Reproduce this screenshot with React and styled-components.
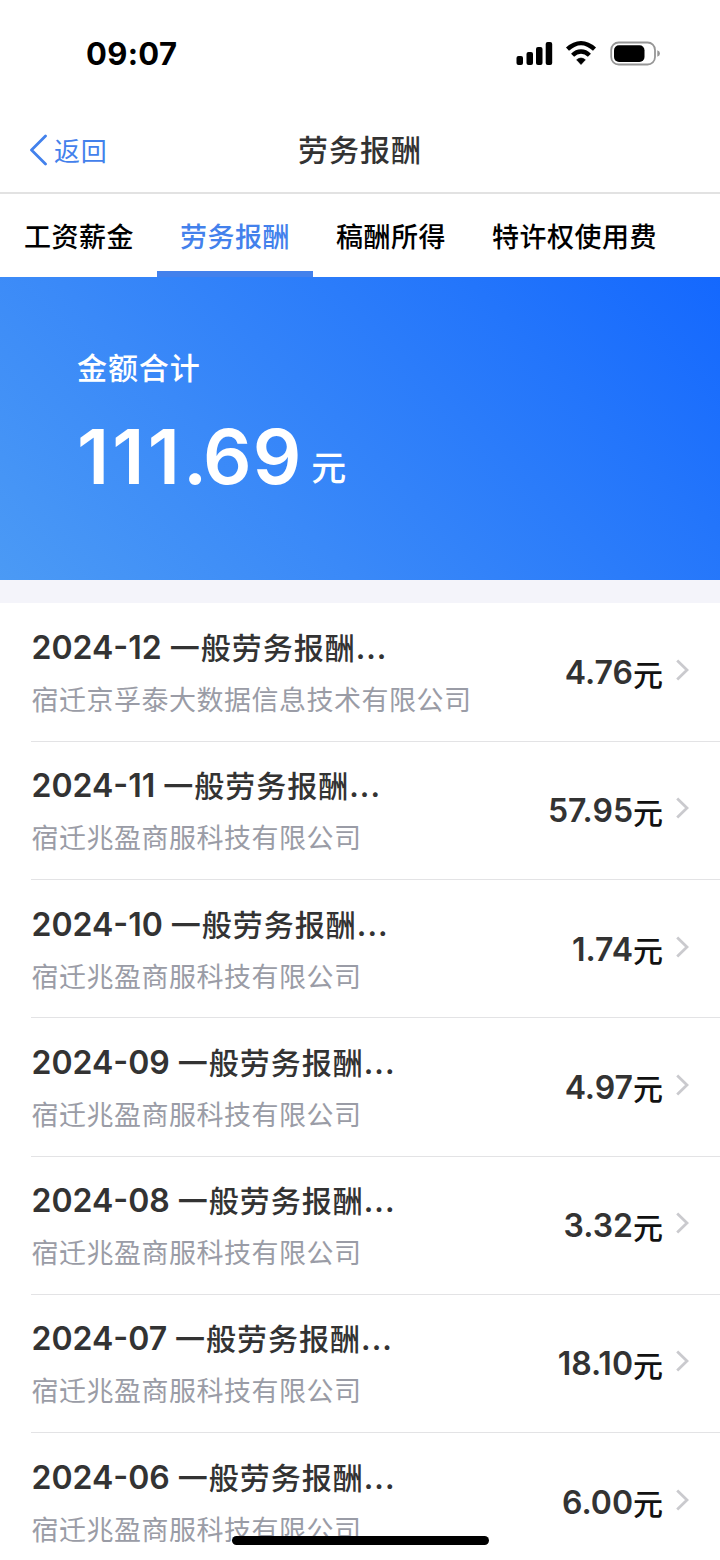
import React from "react";
import styled, { createGlobalStyle } from "styled-components";

const GlobalStyle = createGlobalStyle`
  * {
    box-sizing: border-box;
  }

  body {
    margin: 0;
    background: #fff;
    font-family: Inter, "Noto Sans CJK SC", sans-serif;
  }
`;

// Styled Components
const Screen = styled.div`
  position: relative;
  width: 720px;
  height: 1560px;
  overflow: hidden;
  background: #fff;
`;

const StatusBar = styled.div`
  display: flex;
  justify-content: space-between;
  align-items: center;
  height: 108px;
  padding: 0 60px 0 86px;
`;

const Clock = styled.div`
  font-size: 31px;
  font-weight: 700;
  line-height: 40px;
  letter-spacing: 0.3px;
  color: #000;
`;

const StatusIcons = styled.svg`
  display: block;
  width: 144px;
  height: 26px;
`;

const NavBar = styled.header`
  display: grid;
  grid-template-columns: 1fr auto 1fr;
  align-items: center;
  height: 86px;
  padding: 0 29px;
  border-bottom: 2px solid #e2e2e2;
`;

const BackButton = styled.a`
  display: flex;
  align-items: center;
  gap: 7px;
  font-size: 26px;
  line-height: 36px;
  letter-spacing: 0.8px;
  color: #4381ec;
`;

const BackLabel = styled.span`
  padding-top: 4px;
`;

const BackIcon = styled.svg`
  width: 18px;
  height: 32px;
`;

const Title = styled.h3`
  margin: 0;
  font-size: 30px;
  font-weight: 500;
  line-height: 40px;
  letter-spacing: 1px;
  color: #333;
`;

const Tabs = styled.nav`
  display: flex;
  height: 83px;
  padding-left: 1px;
`;

const Tab = styled.div`
  height: 83px;
  padding: 0 23px;
  border-bottom: 6px solid ${(props) => (props.$active ? "#4381ec" : "transparent")};
  font-size: 27px;
  font-weight: 500;
  line-height: 88px;
  letter-spacing: 0.5px;
  white-space: nowrap;
  color: ${(props) => (props.$active ? "#4381ec" : "#000")};
`;

const Summary = styled.section`
  height: 303px;
  padding: 70px 77px 0;
  background: linear-gradient(45deg, #4b9af5 0%, #3a89f8 35%, #2375fb 75%, #1468fe 100%);
  color: #fff;
`;

const SummaryLabel = styled.div`
  font-size: 30px;
  font-weight: 500;
  line-height: 42px;
  letter-spacing: 0.9px;
`;

const Total = styled.div`
  display: flex;
  align-items: baseline;
  margin-top: 21px;
  line-height: 92px;
`;

const TotalDigits = styled.span`
  font-size: 76px;
  font-weight: 600;
  letter-spacing: ${(props) => props.$spacing}px;
`;

const TotalUnit = styled.span`
  position: relative;
  top: -3px;
  margin-left: 9px;
  font-size: 35px;
  font-weight: 500;
`;

const Divider = styled.div`
  height: 23px;
  background: #f4f4fa;
`;

const List = styled.div`
  padding: 0.5px 0 0 31px;
`;

const Row = styled.div`
  display: flex;
  justify-content: space-between;
  height: 138.3px;
  padding: 24.5px 31px 0 0.5px;
  border-bottom: 1px solid #e3e3e5;
`;

const RowTitle = styled.div`
  display: flex;
  align-items: baseline;
  gap: 8px;
  height: 40px;
  line-height: 40px;
  color: #333;
`;

const Month = styled.span`
  font-size: 32px;
  font-weight: 600;
`;

const Kind = styled.span`
  font-size: 30px;
  font-weight: 500;
  letter-spacing: 1px;
`;

const Dots = styled.span`
  font-weight: 600;
`;

const Company = styled.div`
  margin-top: 13px;
  font-size: 27px;
  line-height: 40px;
  letter-spacing: 0.5px;
  color: #9a9ca6;
`;

const Amount = styled.div`
  display: flex;
  align-items: center;
  height: 89px;
  font-size: 32px;
  font-weight: 600;
  color: #333;
`;

const Unit = styled.span`
  font-size: 30px;
  font-weight: 500;
  color: #111;
`;

const Chevron = styled.svg`
  width: 13px;
  height: 22px;
  margin: 0 0 5px 13px;
`;

const HomeIndicator = styled.div`
  position: absolute;
  left: 232px;
  bottom: 15px;
  width: 257px;
  height: 9px;
  border-radius: 5px;
  background: #000;
`;

const tabs = ["工资薪金", "劳务报酬", "稿酬所得", "特许权使用费"];

const records = [
  { month: "2024-12", company: "宿迁京孚泰大数据信息技术有限公司", amount: "4.76" },
  { month: "2024-11", company: "宿迁兆盈商服科技有限公司", amount: "57.95" },
  { month: "2024-10", company: "宿迁兆盈商服科技有限公司", amount: "1.74" },
  { month: "2024-09", company: "宿迁兆盈商服科技有限公司", amount: "4.97" },
  { month: "2024-08", company: "宿迁兆盈商服科技有限公司", amount: "3.32" },
  { month: "2024-07", company: "宿迁兆盈商服科技有限公司", amount: "18.10" },
  { month: "2024-06", company: "宿迁兆盈商服科技有限公司", amount: "6.00" },
];

function Status() {
  return (
    <StatusBar>
      <Clock>09:07</Clock>
      <StatusIcons viewBox="0 0 144 26">
        <rect x="0.5" y="15" width="6.5" height="9" rx="2" />
        <rect x="10.5" y="11" width="6.5" height="13" rx="2" />
        <rect x="20" y="6" width="6.5" height="18" rx="2" />
        <rect x="29.7" y="1" width="6.5" height="23" rx="2" />
        <path d="M51.5 8.2C60 0.2 70 0.2 78.5 8.2" fill="none" stroke="#000" strokeWidth="4.4" />
        <path d="M56.6 14.2C61.6 9.3 68.4 9.3 73.4 14.2" fill="none" stroke="#000" strokeWidth="4.4" />
        <path d="M60.7 18.8Q65 15.4 69.3 18.8L65 23.4Z" stroke="#000" strokeWidth="0.8" strokeLinejoin="round" />
        <rect x="95.2" y="1.5" width="43.8" height="22" rx="7.5" fill="none" stroke="#969696" strokeWidth="1.8" />
        <rect x="98" y="4.3" width="30.5" height="16.6" rx="5" />
        <path d="M141.3 9.2Q144 10.2 144 12.5T141.3 15.8Z" fill="#969696" />
      </StatusIcons>
    </StatusBar>
  );
}

function Record({ month, company, amount }) {
  return (
    <Row>
      <div>
        <RowTitle>
          <Month>{month}</Month>
          <Kind>
            一般劳务报酬<Dots>...</Dots>
          </Kind>
        </RowTitle>
        <Company>{company}</Company>
      </div>
      <Amount>
        {amount}
        <Unit>元</Unit>
        <Chevron viewBox="0 0 13 22">
          <path d="M1.2 1.6L11 11L1.2 20.4" fill="none" stroke="#cacace" strokeWidth="2.8" />
        </Chevron>
      </Amount>
    </Row>
  );
}

function App() {
  return (
    <>
      <GlobalStyle />
      <Screen>
        <Status />

        <NavBar>
          <BackButton>
            <BackIcon viewBox="0 0 18 32">
              <path
                d="M16.5 2L2.5 16L16.5 30"
                fill="none"
                stroke="#4381ec"
                strokeWidth="2.8"
                strokeLinecap="round"
                strokeLinejoin="round"
              />
            </BackIcon>
            <BackLabel>返回</BackLabel>
          </BackButton>
          <Title>劳务报酬</Title>
        </NavBar>

        <Tabs>
          {tabs.map((tab, index) => (
            <Tab key={tab} $active={index === 1}>
              {tab}
            </Tab>
          ))}
        </Tabs>

        <Summary>
          <SummaryLabel>金额合计</SummaryLabel>
          <Total>
            <TotalDigits $spacing={3.2}>111</TotalDigits>
            <TotalDigits $spacing={-4.2}>.</TotalDigits>
            <TotalDigits $spacing={1}>69</TotalDigits>
            <TotalUnit>元</TotalUnit>
          </Total>
        </Summary>

        <Divider />

        <List>
          {records.map((record) => (
            <Record key={record.month} {...record} />
          ))}
        </List>

        <HomeIndicator />
      </Screen>
    </>
  );
}

export default App;
